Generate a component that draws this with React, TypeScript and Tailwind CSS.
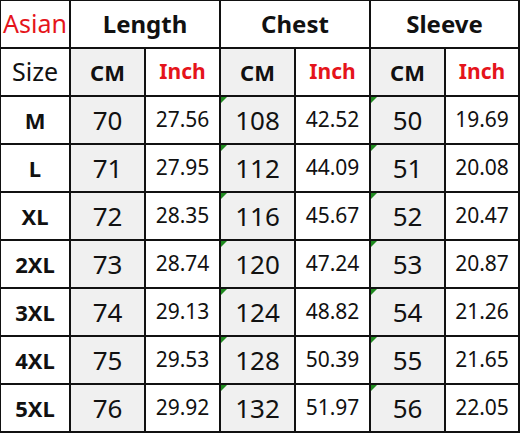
const rows = [
  ["M", "70", "27.56", "108", "42.52", "50", "19.69"],
  ["L", "71", "27.95", "112", "44.09", "51", "20.08"],
  ["XL", "72", "28.35", "116", "45.67", "52", "20.47"],
  ["2XL", "73", "28.74", "120", "47.24", "53", "20.87"],
  ["3XL", "74", "29.13", "124", "48.82", "54", "21.26"],
  ["4XL", "75", "29.53", "128", "50.39", "55", "21.65"],
  ["5XL", "76", "29.92", "132", "51.97", "56", "22.05"],
];

const cell = "flex items-center justify-center bg-white";
const gray = "flex items-center justify-center bg-[#f0f0f0]";

function Flag() {
  return (
    <span className="absolute left-0 top-0 h-0 w-0 border-r-[6px] border-t-[6px] border-r-transparent border-t-[#1f8a1f]" />
  );
}

export default function App() {
  return (
    <div
      className="grid h-[433px] w-[520px] grid-cols-[68px_73px_73px_73px_73px_73px_72px] grid-rows-[repeat(9,46px)] gap-[2px] bg-[#111] pb-[2px] pl-[1px] pr-[2px] pt-[1px] text-[#111]"
      style={{ fontFamily: '"Noto Sans", "Open Sans", sans-serif' }}
    >
      <div className={`${cell} text-[25px] text-[#e5141b]`}>Asian</div>
      <div className={`${cell} col-span-2 text-[24px] font-bold`}>Length</div>
      <div className={`${cell} col-span-2 text-[24px] font-bold`}>Chest</div>
      <div className={`${cell} col-span-2 text-[24px] font-bold`}>Sleeve</div>

      <div className={`${cell} text-[25px]`}>Size</div>
      {[0, 1, 2].map((i) => (
        <div key={i} className="contents">
          <div className={`${gray} text-[22px] font-bold`}>CM</div>
          <div className={`${cell} text-[21px] font-bold text-[#e5141b]`}>Inch</div>
        </div>
      ))}

      {rows.map((r) => (
        <div key={r[0]} className="contents">
          <div className={`${cell} text-[22px] font-bold`}>{r[0]}</div>
          <div className={`${gray} text-[26px]`}>{r[1]}</div>
          <div className={`${cell} text-[21px]`}>{r[2]}</div>
          <div className={`${gray} relative text-[26px]`}>
            <Flag />
            {r[3]}
          </div>
          <div className={`${cell} text-[21px]`}>{r[4]}</div>
          <div className={`${gray} relative text-[26px]`}>
            <Flag />
            {r[5]}
          </div>
          <div className={`${cell} text-[21px]`}>{r[6]}</div>
        </div>
      ))}
    </div>
  );
}
